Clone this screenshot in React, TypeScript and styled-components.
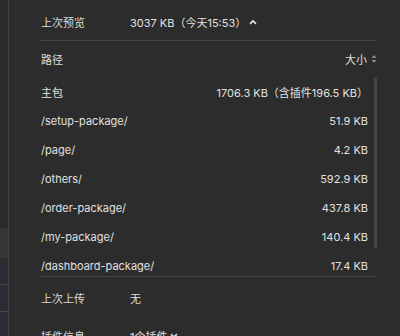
import React from "react";
import styled, { createGlobalStyle } from "styled-components";

const GlobalStyle = createGlobalStyle`
  *, *::before, *::after {
    box-sizing: border-box;
  }
  html, body {
    margin: 0;
    padding: 0;
    background: #2c2c2c;
  }
  body {
    font-family: Inter, "Noto Sans CJK SC", sans-serif;
    font-size: 11px;
    color: #e0e0e0;
  }
`;

const Page = styled.div`
  display: flex;
  width: 400px;
  height: 336px;
  overflow: hidden;
  background: #2c2c2c;
`;

const Sidebar = styled.div`
  display: flex;
  flex-direction: column;
  width: 9px;
  flex-shrink: 0;
  background: #2a2a2a;
  border-right: 1px solid #434343;
`;

const SideBlock = styled.div<{ h: number; tone: string; line?: boolean }>`
  height: ${(p) => p.h}px;
  flex-shrink: 0;
  background: ${(p) => p.tone};
  border-top: ${(p) => (p.line ? "1px solid #4a4a4a" : "none")};
`;

const SideFill = styled.div`
  flex: 1;
`;

const Main = styled.div`
  flex: 1;
  display: flex;
  flex-direction: column;
  padding: 0 23px 0 32px;
`;

const InfoRow = styled.div<{ h: number; divider?: boolean }>`
  display: flex;
  align-items: center;
  height: ${(p) => p.h}px;
  flex-shrink: 0;
  padding-top: 3px;
  border-bottom: ${(p) => (p.divider ? "1px solid #454545" : "none")};
`;

const Label = styled.div`
  width: 89px;
  flex-shrink: 0;
  color: #dadada;
`;

const Value = styled.div`
  display: flex;
  align-items: center;
  gap: 3px;
  color: #e0e0e0;
`;

const TableHead = styled.div`
  display: flex;
  align-items: center;
  justify-content: space-between;
  height: 36px;
  flex-shrink: 0;
`;

const SortLabel = styled.div`
  display: flex;
  align-items: center;
  gap: 4px;
`;

const ListWrap = styled.div`
  position: relative;
  height: 200px;
  flex-shrink: 0;
  overflow: hidden;
  border-bottom: 1px solid #454545;
`;

const Thumb = styled.div`
  position: absolute;
  right: 0;
  top: 0;
  width: 3px;
  height: 171px;
  border-radius: 2px;
  background: #474747;
`;

const Row = styled.div`
  display: flex;
  align-items: center;
  justify-content: space-between;
  height: 29px;
  padding-right: 9px;
  padding-top: 1px;
`;

const Chevron: React.FC<{ up?: boolean }> = ({ up }) => (
  <svg width="8" height="6" viewBox="0 0 8 6">
    <path
      d={up ? "M1.5 4.4 L4 1.9 L6.5 4.4" : "M1.5 1.6 L4 4.1 L6.5 1.6"}
      fill="none"
      stroke="#e6e6e6"
      strokeWidth="1.6"
      strokeLinecap="round"
      strokeLinejoin="round"
    />
  </svg>
);

const SortIcon = () => (
  <svg width="6" height="10" viewBox="0 0 6 10">
    <path d="M3 1 L5.5 4 L0.5 4 Z" fill="#8a8a8a" />
    <path d="M3 9 L5.5 6 L0.5 6 Z" fill="#8a8a8a" />
  </svg>
);

const packages = [
  { path: "主包", size: "1706.3 KB（含插件196.5 KB）" },
  { path: "/setup-package/", size: "51.9 KB" },
  { path: "/page/", size: "4.2 KB" },
  { path: "/others/", size: "592.9 KB" },
  { path: "/order-package/", size: "437.8 KB" },
  { path: "/my-package/", size: "140.4 KB" },
  { path: "/dashboard-package/", size: "17.4 KB" },
];

export default function App() {
  return (
    <Page>
      <GlobalStyle />
      <Sidebar>
        <SideFill />
        <SideBlock h={30} tone="#363636" />
        <SideBlock h={26} tone="#2b2b31" />
        <SideBlock h={27} tone="#2b2b31" line />
        <SideBlock h={25} tone="#2b2b31" line />
      </Sidebar>
      <Main>
        <InfoRow h={41} divider>
          <Label>上次预览</Label>
          <Value>
            3037 KB（今天15:53）
            <Chevron up />
          </Value>
        </InfoRow>
        <TableHead>
          <span>路径</span>
          <SortLabel>
            大小
            <SortIcon />
          </SortLabel>
        </TableHead>
        <ListWrap>
          {packages.map((p) => (
            <Row key={p.path}>
              <span>{p.path}</span>
              <span>{p.size}</span>
            </Row>
          ))}
          <Thumb />
        </ListWrap>
        <InfoRow h={38}>
          <Label>上次上传</Label>
          <Value>无</Value>
        </InfoRow>
        <InfoRow h={38}>
          <Label>插件信息</Label>
          <Value>
            1个插件
            <Chevron />
          </Value>
        </InfoRow>
      </Main>
    </Page>
  );
}
